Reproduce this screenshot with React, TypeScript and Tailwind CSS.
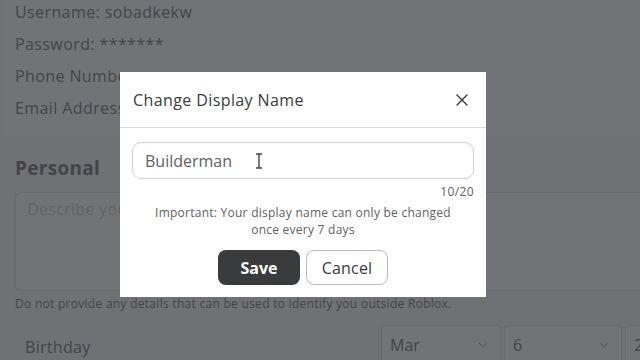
import React from 'react';
import { X, ChevronDown } from 'lucide-react';

function InfoRow({ children }: { children: React.ReactNode }) {
  return <div className="h-[32px] flex items-center text-[16px] tracking-[0.4px] text-[#393b3d]">{children}</div>;
}

function DateSelect({ value, width }: { value: string; width: string }) {
  return (
    <div className={`h-[40px] ${width} shrink-0 flex items-center justify-between pl-[8px] pr-[10px] bg-white border border-[#d6d7d9] rounded-[4px] text-[16px] text-[#393b3d]`}>
      <span>{value}</span>
      <ChevronDown className="w-[14px] h-[14px] text-[#555]" strokeWidth={1.5} />
    </div>
  );
}

function IBeam() {
  return (
    <svg width="10" height="16" viewBox="0 0 10 16" className="text-[#444]">
      <path d="M2 1h6M5 1v14M2 15h6" stroke="currentColor" strokeWidth="1.4" fill="none" />
    </svg>
  );
}

export default function App() {
  return (
    <div className="relative w-[640px] h-[360px] overflow-hidden bg-[#f2f4f5] font-['Open_Sans',sans-serif]">
      {/* account page behind */}
      <div className="ml-[4px] h-[140px] bg-white pl-[11px] -mt-[4px]">
        <InfoRow>Username: sobadkekw</InfoRow>
        <InfoRow>Password: *******</InfoRow>
        <InfoRow>Phone Number</InfoRow>
        <InfoRow>Email Address</InfoRow>
      </div>
      <div className="pl-[15px] pt-[18px]">
        <div className="text-[19px] font-bold tracking-[0.3px] text-[#393b3d] leading-[28px]">Personal</div>
        <div className="mt-[10px] h-[99px] w-[640px] bg-white border border-[#d6d7d9] rounded-[6px] px-[11px] pt-[4px] text-[16px] tracking-[0.3px] text-[#b8b9bb]">
          Describe yourself
        </div>
        <div className="mt-[5px] text-[12px] tracking-[0.28px] text-[#393b3d] leading-[16px]">
          Do not provide any details that can be used to identify you outside Roblox.
        </div>
        <div className="mt-[17px] flex items-center">
          <div className="pl-[10px] w-[366px] shrink-0 text-[16px] tracking-[0.3px] text-[#393b3d]">Birthday</div>
          <div className="flex gap-[3px] -mt-[4px]">
            <DateSelect value="Mar" width="w-[120px]" />
            <DateSelect value="6" width="w-[118px]" />
            <DateSelect value="2010" width="w-[100px]" />
          </div>
        </div>
      </div>

      {/* overlay */}
      <div className="absolute inset-0 bg-[rgba(70,71,75,0.76)]" />

      {/* modal */}
      <div className="absolute left-[120px] top-[72px] w-[366px] bg-white text-[#393b3d]">
        <div className="h-[56px] flex items-center justify-between pl-[13px] pr-[14px] border-b border-[#dcdcdc]">
          <span className="text-[16px] tracking-[0.4px] pt-[1px]">Change Display Name</span>
          <X className="w-[20px] h-[20px] text-[#393b3d]" strokeWidth={1.6} />
        </div>
        <div className="px-[12px] pt-[14px] pb-[12px]">
          <div className="h-[37px] flex items-center gap-[22px] pl-[12px] border border-[#cfd0d2] rounded-[9px] text-[16px] text-[#606162]">
            <span>Builderman</span>
            <IBeam />
          </div>
          <div className="mt-[5px] text-right text-[12px] tracking-[0.4px] text-[#606162] leading-[16px]">10/20</div>
          <div className="mt-[4px] text-center text-[12px] tracking-[0.25px] text-[#606162] leading-[17px]">
            Important: Your display name can only be changed
            <br />
            once every 7 days
          </div>
          <div className="mt-[12px] flex justify-center gap-[6px]">
            <button className="w-[82px] h-[35px] rounded-[8px] bg-[#393b3d] text-white text-[16px] font-bold">Save</button>
            <button className="w-[82px] h-[35px] rounded-[8px] border border-[#b8b9bb] bg-white text-[#393b3d] text-[16px] tracking-[0.2px]">Cancel</button>
          </div>
        </div>
      </div>
    </div>
  );
}
